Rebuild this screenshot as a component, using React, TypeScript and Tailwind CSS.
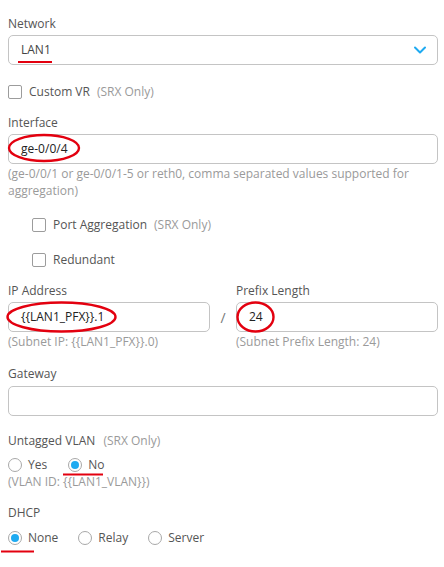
import { useState } from 'react'

const Label = ({ children, className = '' }: { children: React.ReactNode; className?: string }) => (
  <div className={`text-[12px] leading-[17px] text-[#555] ${className}`}>{children}</div>
)

const Help = ({ children, className = '' }: { children: React.ReactNode; className?: string }) => (
  <div className={`text-[12px] leading-[17px] text-[#9a9a9a] ${className}`}>{children}</div>
)

const TextBox = ({ value = '', className = '' }: { value?: string; className?: string }) => (
  <div className={`h-[30px] border border-[#c4c4c4] rounded-[5px] bg-white px-3 flex items-center text-[12px] text-[#222] ${className}`}>
    {value}
  </div>
)

const Checkbox = ({ label, note }: { label: string; note?: string }) => (
  <div className="flex items-center h-[17px] text-[12px] leading-[17px]">
    <span className="w-[14px] h-[14px] border border-[#9c9c9c] rounded-[2px] bg-white shrink-0" />
    <span className="ml-[7px] text-[#555]">{label}</span>
    {note && <span className="ml-[7px] text-[#9a9a9a]">{note}</span>}
  </div>
)

const Radio = ({ label, checked }: { label: string; checked?: boolean }) => (
  <div className="flex items-center h-[17px] text-[12px] leading-[17px]">
    <span className="w-[14px] h-[14px] rounded-full border border-[#a8a8a8] bg-white flex items-center justify-center shrink-0">
      {checked && <span className="w-[8px] h-[8px] rounded-full bg-[#1eaaf1]" />}
    </span>
    <span className="ml-[6px] text-[#555]">{label}</span>
  </div>
)

export default function App() {
  const [network] = useState('LAN1')

  return (
    <div className="relative w-[444px] h-[567px] bg-white overflow-hidden" style={{ fontFamily: '"Open Sans", "Noto Sans", sans-serif' }}>
      <div className="pl-2 pr-[6px] pt-[15px] flex flex-col">
        {/* Network */}
        <Label>Network</Label>
        <div className="mt-[3px] h-[30px] border border-[#c4c4c4] rounded-[5px] bg-white pl-3 pr-[10px] flex items-center justify-between text-[12px] text-[#444]">
          <span>{network}</span>
          <svg className="w-[14px] h-[14px]" viewBox="0 0 14 14" fill="none" stroke="#1eaaf1" strokeWidth={2} strokeLinecap="round" strokeLinejoin="round">
            <path d="M2 4.5l5 5 5-5" />
          </svg>
        </div>

        <div className="mt-[18px]">
          <Checkbox label="Custom VR" note="(SRX Only)" />
        </div>

        {/* Interface */}
        <Label className="mt-[14px]">Interface</Label>
        <TextBox value="ge-0/0/4" className="mt-[3px]" />
        <Help className="mt-[1px]">
          (ge-0/0/1 or ge-0/0/1-5 or reth0, comma separated values supported for aggregation)
        </Help>

        <div className="pl-6 mt-[17px] flex flex-col gap-[18px]">
          <Checkbox label="Port Aggregation" note="(SRX Only)" />
          <Checkbox label="Redundant" />
        </div>

        {/* IP / Prefix */}
        <div className="mt-[14px] grid grid-cols-[1fr_26px_1fr]">
          <div>
            <Label>IP Address</Label>
            <TextBox value="{{LAN1_PFX}}.1" className="mt-[3px]" />
            <Help className="mt-[1px]">(Subnet IP: {'{{LAN1_PFX}}'}.0)</Help>
          </div>
          <div className="pt-[20px] h-[50px] flex items-center justify-center text-[14px] text-[#777]">/</div>
          <div>
            <Label>Prefix Length</Label>
            <TextBox value="24" className="mt-[3px]" />
            <Help className="mt-[1px]">(Subnet Prefix Length: 24)</Help>
          </div>
        </div>

        {/* Gateway */}
        <Label className="mt-[15px]">Gateway</Label>
        <TextBox className="mt-[4px]" />

        {/* Untagged VLAN */}
        <Label className="mt-[16px]">
          Untagged VLAN <span className="ml-[5px] text-[#9a9a9a]">(SRX Only)</span>
        </Label>
        <div className="mt-[7px] flex gap-[21px]">
          <Radio label="Yes" />
          <Radio label="No" checked />
        </div>
        <Help>(VLAN ID: {'{{LAN1_VLAN}}'})</Help>

        {/* DHCP */}
        <Label className="mt-[14px]">DHCP</Label>
        <div className="mt-[8px] flex gap-[20px]">
          <Radio label="None" checked />
          <Radio label="Relay" />
          <Radio label="Server" />
        </div>
      </div>

      {/* red annotation marks */}
      <svg className="absolute inset-0 pointer-events-none" width="444" height="567" viewBox="0 0 444 567" fill="none" stroke="#e3000f">
        <path d="M18 62H52" strokeWidth={2.2} />
        <ellipse cx="44" cy="148" rx="35" ry="13" strokeWidth={2.4} />
        <ellipse cx="61.5" cy="317" rx="54" ry="14.5" strokeWidth={2.4} />
        <ellipse cx="255.5" cy="317" rx="18" ry="14.5" strokeWidth={2.4} />
        <path d="M63 474.5H103" strokeWidth={2.2} />
        <path d="M1 551.5H34" strokeWidth={2.2} />
      </svg>
    </div>
  )
}
